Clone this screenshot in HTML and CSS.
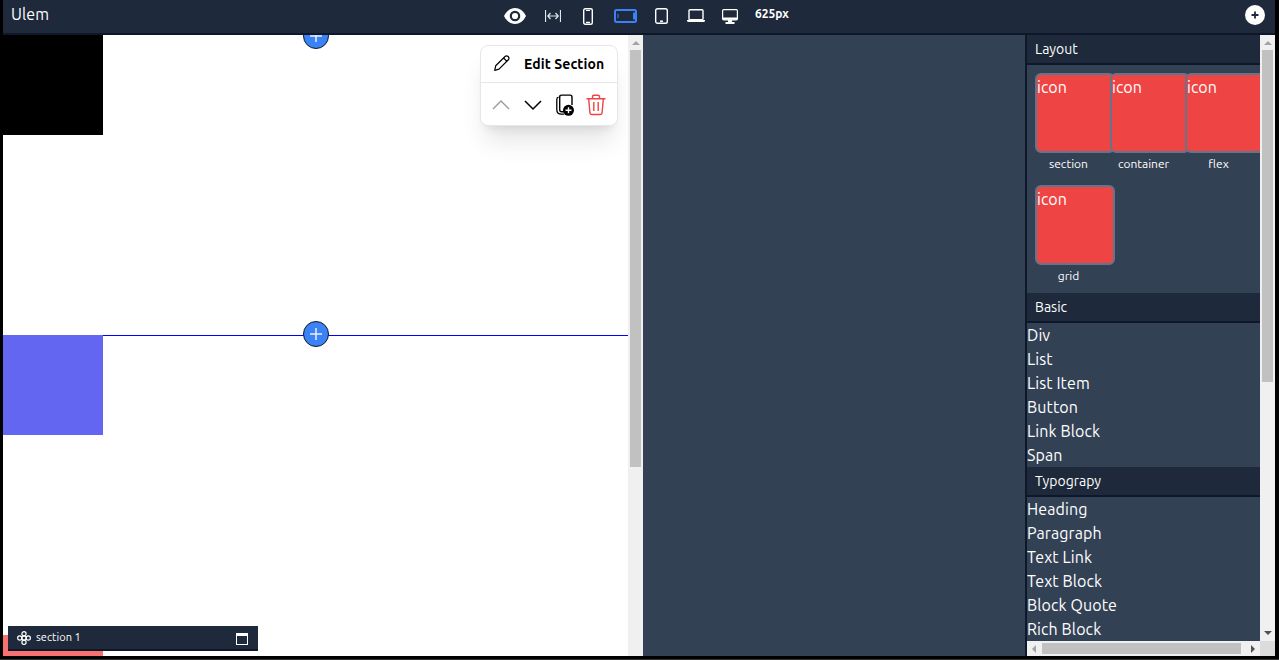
FILE: index.html
```html
<!DOCTYPE html>
<html lang="en">
<head>
<meta charset="utf-8">
<title>Ulem</title>
<link rel="stylesheet" href="styles.css">
</head>
<body>
<div class="app">
  <header class="topbar">
    <span class="brand">Ulem</span>
    <nav class="devices">
      <svg class="eye" width="22" height="16" viewBox="0 0 22 16"><path d="M0 8C2.600 2.700 6.500 0 11 0s8.400 2.700 11 8c-2.600 5.300-6.500 8-11 8S2.600 13.300 0 8z" fill="#fff"/><circle cx="11" cy="8" r="4.200" fill="none" stroke="#1e293b" stroke-width="2.200"/></svg>
      <svg class="fit" width="16" height="12" viewBox="0 0 16 12" fill="none" stroke="#e2e8f0"><path d="M.5 0v12M15.500 0v12M3 6h10M5.500 3L2.800 6l2.700 3M10.500 3l2.700 3-2.700 3" stroke-width="1.200"/></svg>
      <svg class="phone" width="10" height="17" viewBox="0 0 10 17" fill="none" stroke="#fff"><rect x=".7" y=".7" width="8.600" height="15.600" rx="1.500" stroke-width="1.400"/><path d="M3 2.500h4M3 14.300h4" stroke-width="1.200"/></svg>
      <svg class="landscape" width="23" height="14" viewBox="0 0 23 14" fill="none" stroke="#3b82f6"><rect x="1" y="1" width="21" height="12" rx="1.500" stroke-width="2"/><path d="M4 5v4" stroke-width="1"/><path d="M21 4.500h-1v5h1" stroke-width="2"/></svg>
      <svg class="tablet" width="13" height="16" viewBox="0 0 13 16" fill="none" stroke="#fff"><rect x=".7" y=".7" width="11.600" height="14.600" rx="1.800" stroke-width="1.400"/><path d="M5 13.200h3" stroke-width="1.500"/></svg>
      <svg class="laptop" width="18" height="14" viewBox="0 0 18 14" fill="none" stroke="#fff"><rect x="2" y=".7" width="14" height="10" rx="1" stroke-width="1.400"/><path d="M0 11h18v.8q0 1.200-1.500 1.200h-15Q0 13 0 11.800z" fill="#fff" stroke="none"/></svg>
      <svg class="desktop" width="16" height="15" viewBox="0 0 16 15"><rect x=".6" y=".6" width="14.800" height="10.300" rx="1.200" fill="none" stroke="#fff" stroke-width="1.200"/><path d="M1 8.500h14v2.300H1zM6 11h4v2h2.500v2h-9v-2H6z" fill="#fff"/></svg>
      <span class="width-label">625px</span>
    </nav>
    <svg class="add" width="20" height="20" viewBox="0 0 20 20"><circle cx="10" cy="10" r="10" fill="#fff"/><path d="M10 6.500v7M6.500 10h7" stroke="#1e293b" stroke-width="1.800"/></svg>
  </header>
  <main class="workspace">
    <div class="preview">
      <div class="page">
        <section class="block first"><div class="box black"></div></section>
        <section class="block second"><div class="box indigo"></div></section>
        <section class="block third"><div class="box coral"></div></section>
        <svg class="insert top" width="26" height="26" viewBox="0 0 26 26"><circle cx="13" cy="13" r="12.500" fill="#3b82f6" stroke="#111827"/><path d="M13 7v12M7 13h12" stroke="#e8f1ff" stroke-width="1.500"/></svg>
        <svg class="insert middle" width="26" height="26" viewBox="0 0 26 26"><circle cx="13" cy="13" r="12.500" fill="#3b82f6" stroke="#111827"/><path d="M13 7v12M7 13h12" stroke="#e8f1ff" stroke-width="1.500"/></svg>
        <div class="popover">
          <div class="edit">
            <svg width="16" height="16" viewBox="0 0 16 16" fill="none" stroke="#000" stroke-width="1.200" stroke-linejoin="round"><path d="M.7 15.300l1-4.500L11.300 1.300q1.400-1.100 2.800.2t.5 3L5 14.200zM9.600 3l3.300 3.300"/></svg>
            <strong>Edit Section</strong>
          </div>
          <div class="actions">
            <svg width="18" height="20" viewBox="0 0 18 20" fill="none" stroke="#999" stroke-width="1.300"><path d="M1 14l8-8 8 8"/></svg>
            <svg width="18" height="20" viewBox="0 0 18 20" fill="none" stroke="#000" stroke-width="1.500"><path d="M1 6l8 8 8-8"/></svg>
            <svg width="18" height="22" viewBox="0 0 18 22" fill="none" stroke="#000"><path d="M8 17.700H5.600q-1.900 0-1.900-1.900V3q0-1.900 1.900-1.900h8.500q1.900 0 1.900 1.900v8" stroke-width="1.400"/><path d="M2.500 3.200Q.8 3.700.8 5.500v10q0 4.700 4.500 4.700H8" stroke-width="1.300"/><circle cx="12.500" cy="16.300" r="5.500" fill="#000" stroke="none"/><path d="M12.500 13.300v6M9.500 16.300h6" stroke="#fff" stroke-width="1.400"/></svg>
            <svg width="20" height="22" viewBox="0 0 20 22" fill="none" stroke="#ef4444" stroke-width="1.400"><path d="M.5 4.700h19M6.500 4.500V2.700q0-1.500 1.500-1.500h4q1.500 0 1.500 1.500v1.800M2.700 5l1.200 13.500q.2 2 2.100 2h8q1.900 0 2.100-2L17.300 5M7.800 8v9M12.200 8v9"/></svg>
          </div>
        </div>
        <div class="dock">
          <svg width="14" height="14" viewBox="0 0 14 14" fill="none" stroke="#fff" stroke-width="1.200"><circle cx="7" cy="2.800" r="2.100"/><circle cx="2.700" cy="7" r="2.100"/><circle cx="11.300" cy="7" r="2.100"/><circle cx="7" cy="11.200" r="2.100"/><circle cx="7" cy="7" r="2.100"/></svg>
          <span>section 1</span>
          <i class="restore"></i>
        </div>
      </div>
      <div class="vscroll"><i class="arrow up"></i><i class="thumb long"></i></div>
    </div>
    <div class="empty"></div>
    <aside class="sidebar">
      <div class="panel">
        <h2>Layout</h2>
        <div class="tiles">
          <div class="tile"><div class="art">icon</div><span>section</span></div>
          <div class="tile"><div class="art">icon</div><span>container</span></div>
          <div class="tile"><div class="art">icon</div><span>flex</span></div>
          <div class="tile"><div class="art">icon</div><span>grid</span></div>
        </div>
        <h2>Basic</h2>
        <ul><li>Div</li><li>List</li><li>List Item</li><li>Button</li><li>Link Block</li><li>Span</li></ul>
        <h2>Typograpy</h2>
        <ul><li>Heading</li><li>Paragraph</li><li>Text Link</li><li>Text Block</li><li>Block Quote</li><li>Rich Block</li></ul>
      </div>
      <div class="vscroll"><i class="arrow up"></i><i class="thumb short"></i><i class="arrow down"></i></div>
      <div class="hscroll"><i class="arrow left"></i><i class="thumb wide"></i><i class="arrow right"></i></div>
      <div class="corner"></div>
    </aside>
  </main>
</div>
</body>
</html>
```
FILE: styles.css
```css
* { box-sizing: border-box; }
body { margin: 0; background: #000; color: #fff; font: 16px/24px Ubuntu, "Noto Sans", sans-serif; overflow: hidden; }
svg { display: block; flex: none; }
.app { height: 660px; padding: 0 4px 3px 3px; border-bottom: 1px solid #333; display: flex; flex-direction: column; }
.topbar { flex: none; height: 35px; background: #1e293b; border-bottom: 2px solid #0f172a; display: flex; align-items: flex-start; }
.brand { width: 501px; padding: 2px 0 0 8px; letter-spacing: .1px; }
.devices { display: flex; align-items: center; height: 32px; flex: 1; }
.fit { margin-left: 19px; }
.phone { margin-left: 22px; }
.landscape { margin-left: 21px; }
.tablet { margin-left: 18px; }
.laptop { margin-left: 19px; }
.desktop { margin-left: 17px; }
.width-label { margin: -4px 0 0 17px; font-size: 12px; font-weight: 700; line-height: 16px; }
.add { margin: 5px 10px 0 0; }
.workspace { flex: 1; min-height: 0; display: flex; }
.preview { width: 640px; display: flex; background: #fff; }
.page { position: relative; width: 625px; overflow: hidden; }
.block { height: 300px; }
.second { border-top: 1px solid #00f; }
.box { width: 100px; height: 100px; }
.black { background: #000; }
.indigo { background: #6366f1; margin-top: -1px; }
.coral { background: #f87171; }
.insert { position: absolute; left: 300px; }
.insert.top { top: -12px; }
.insert.middle { top: 286px; }
.popover { position: absolute; left: 477px; top: 10px; width: 138px; height: 81px; background: #fff; border: 1px solid #e5e7eb; border-radius: 8px; color: #000; box-shadow: 0 20px 25px -5px rgba(0,0,0,.1), 0 8px 10px -6px rgba(0,0,0,.1); }
.edit { height: 37px; display: flex; align-items: center; gap: 14px; padding-left: 13px; border-bottom: 1px solid #e5e7eb; font-size: 14px; letter-spacing: .08px; white-space: nowrap; }
.edit svg { margin-top: -2px; }
.actions { height: 43px; display: flex; align-items: center; gap: 14px; padding-left: 11px; }
.actions svg:last-child { margin-left: -2px; }
.dock { position: absolute; left: 5px; bottom: 5px; width: 250px; height: 25px; background: #1e293b; border-bottom: 2px solid #0f172a; display: flex; align-items: center; gap: 5px; padding: 0 10px 0 9px; font-size: 11px; line-height: 20px; }
.dock span { margin-top: -2px; letter-spacing: .05px; }
.restore { width: 12px; height: 12px; margin: 2px 0 0 auto; border: 1px solid #fff; border-top-width: 3px; }
.empty { flex: 1; background: #334155; }
.sidebar { width: 250px; border-left: 2px solid #0f172a; display: grid; grid-template-columns: 233px 15px; grid-template-rows: 606px 15px; }
.panel { background: #334155; overflow: hidden; }
h2 { height: 30px; margin: 0; padding: 4px 8px 0; font-size: 14px; line-height: 20px; font-weight: 400; background: #1e293b; border-bottom: 2px solid #0f172a; }
.tiles { height: 228px; padding: 8px 0 0 8px; display: grid; grid-template-columns: repeat(3, 75px); grid-auto-rows: 112px; }
.tile span { display: block; width: 67px; margin-top: 3px; text-align: center; font-size: 12px; line-height: 16px; }
.art { width: 80px; height: 80px; background: #ef4444; border: 2px solid #64748b; border-radius: 6px; }
ul { list-style: none; margin: 0; padding: 0; letter-spacing: .1px; }
.vscroll { width: 15px; background: #f0f0f0; display: flex; flex-direction: column; align-items: center; }
.hscroll { height: 15px; background: #f0f0f0; display: flex; align-items: center; }
.corner { background: #dcdcdc; }
.thumb { background: #c1c1c1; flex: none; }
.long { width: 11px; height: 417px; margin-top: 5px; }
.short { width: 11px; height: 332px; margin-top: 5px; }
.wide { width: 199px; height: 11px; margin-left: 6px; }
.arrow { width: 0; height: 0; border: 4px solid transparent; flex: none; }
.up { border-top: 0; border-bottom-color: #a3a3a3; margin-top: 6px; }
.down { border-bottom: 0; border-top-color: #505050; margin: auto 0 6px; }
.left { border-left: 0; border-right-color: #a3a3a3; margin-left: 5px; }
.right { border-right: 0; border-left-color: #505050; margin-left: 10px; }
```
